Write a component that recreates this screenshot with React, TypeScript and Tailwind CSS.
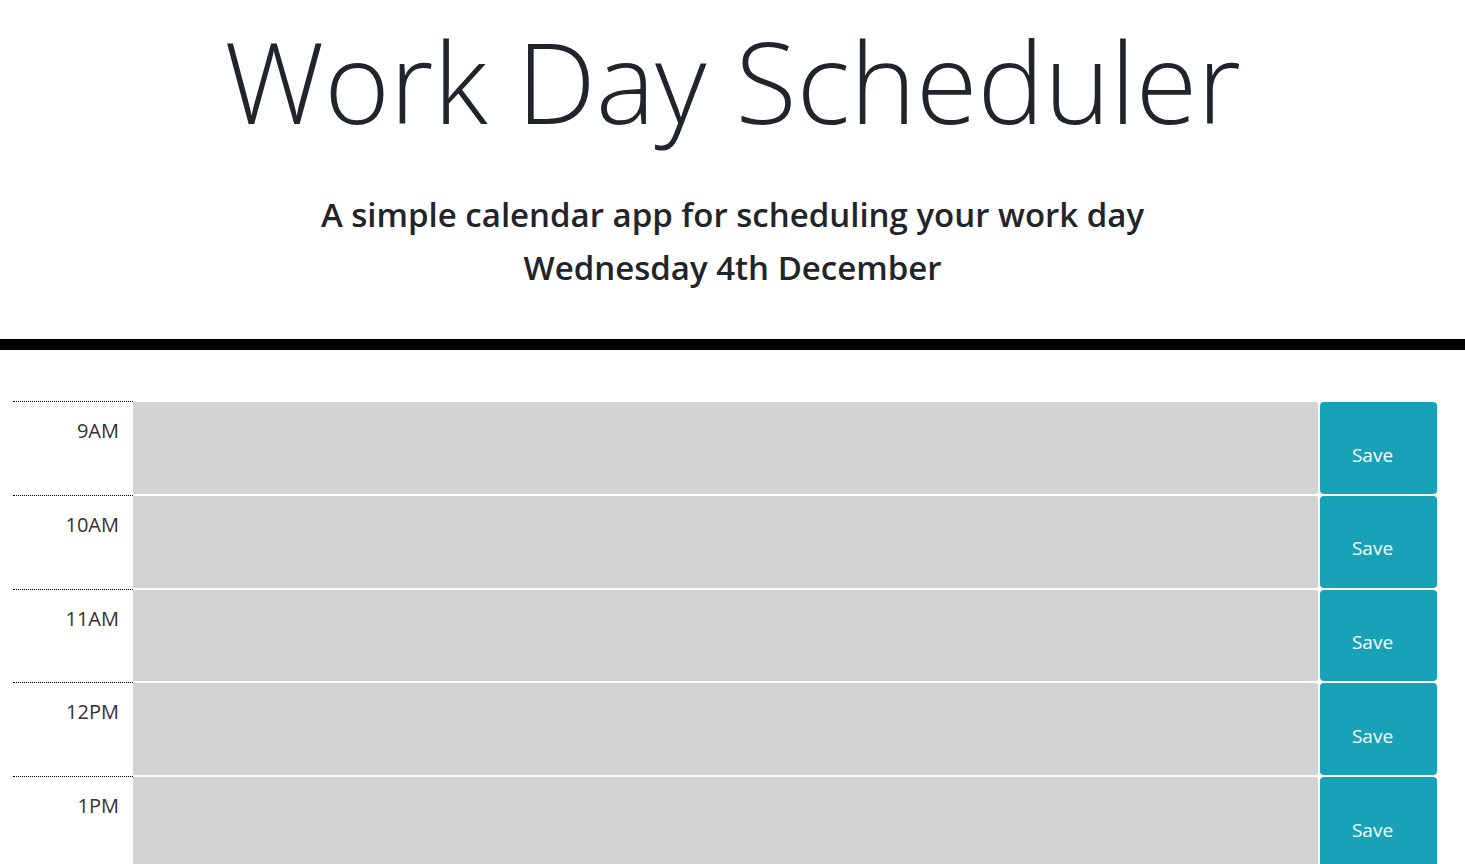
const hours = ["9AM", "10AM", "11AM", "12PM", "1PM"];

function HourRow({ hour }: { hour: string }) {
  return (
    <div className="flex h-[93.75px]">
      <div className="w-[120px] shrink-0 border-t border-dotted border-black pr-[14px] pt-[16px] text-right text-[20px] leading-[26px] text-[#333]">
        {hour}
      </div>
      <div className="flex flex-1 gap-[2px] py-px">
        <textarea className="flex-1 resize-none rounded-r-[2px] bg-[#d3d3d3] outline-none" />
        <button className="w-[117px] shrink-0 rounded-[4px] bg-[#17a2b8] pr-[12px] pt-[14px] text-[19px] text-white">
          Save
        </button>
      </div>
    </div>
  );
}

export default function App() {
  return (
    <div className="min-h-screen bg-white font-['Open_Sans','Noto_Sans',sans-serif] text-[#212529]">
      <header className="flex flex-col items-center pt-[9px]">
        <h1 className="text-[112px] font-light leading-[144px]">Work Day Scheduler</h1>
        <p className="mt-[35px] text-[33px] font-semibold leading-[53px]">
          A simple calendar app for scheduling your work day
        </p>
        <p className="text-[33px] font-semibold leading-[53px]">Wednesday 4th December</p>
      </header>
      <div className="mt-[45px] h-[11px] bg-black" />
      <main className="flex flex-col pb-10 pl-[13px] pr-[28px] pt-[51px]">
        {hours.map((h) => (
          <HourRow key={h} hour={h} />
        ))}
      </main>
    </div>
  );
}
